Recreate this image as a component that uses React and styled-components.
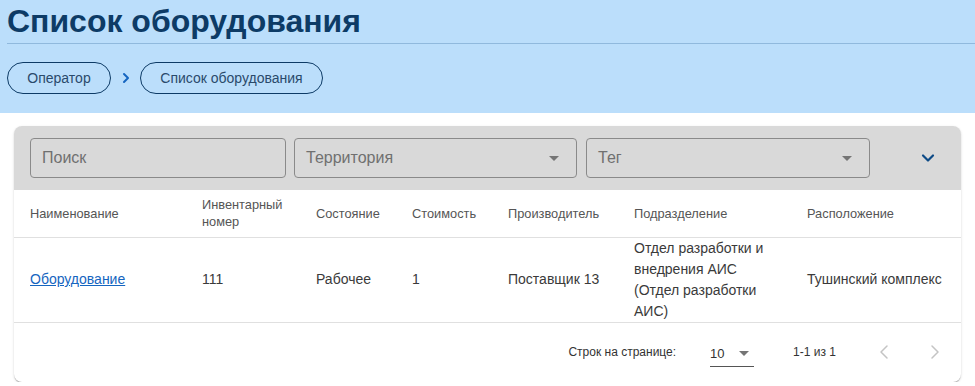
import React from "react";
import styled, { createGlobalStyle } from "styled-components";

const Global = createGlobalStyle`
  html, body { margin: 0; padding: 0; background: #fff; }
  body { font-family: "Liberation Sans", Arial, sans-serif; }
  * { box-sizing: border-box; }
`;

const Header = styled.header`
  background: #bbdefb;
  height: 113px;
  padding: 0 0 0 7px;
`;

const Title = styled.h1`
  margin: 0;
  padding-top: 3px;
  font-size: 32px;
  line-height: 36px;
  font-weight: 700;
  color: #0d3b66;
  height: 44px;
  border-bottom: 1px solid #90b9dd;
`;

const Crumbs = styled.nav`
  display: flex;
  align-items: center;
  margin-top: 18px;
`;

const Pill = styled.span`
  display: inline-flex;
  align-items: center;
  justify-content: center;
  height: 32px;
  width: ${(p) => p.$w}px;
  border: 1px solid #0d3b66;
  border-radius: 16px;
  font-size: 14px;
  color: #2a4a6b;
`;

const Sep = styled.span`
  display: flex;
  width: 29px;
  justify-content: center;
  color: #1565c0;
`;

const Main = styled.main`
  padding: 13px 14px 0 14px;
`;

const Card = styled.section`
  border-radius: 8px;
  background: #fff;
  box-shadow: 0 2px 1px -1px rgba(0,0,0,0.2), 0 1px 1px 0 rgba(0,0,0,0.14), 0 1px 3px 0 rgba(0,0,0,0.12);
  overflow: hidden;
`;

const Filters = styled.div`
  background: #d9d9d9;
  height: 64px;
  display: flex;
  align-items: center;
  padding: 0 16px;
`;

const Field = styled.div`
  width: ${(p) => p.$w}px;
  margin-right: ${(p) => p.$mr}px;
  height: 40px;
  border: 1px solid #8a8a8a;
  border-radius: 4px;
  display: flex;
  align-items: center;
  justify-content: space-between;
  padding: 0 12px 0 11px;
  font-size: 16px;
  color: #707070;
`;

const Caret = styled.span`
  width: 0;
  height: 0;
  border-left: 5px solid transparent;
  border-right: 5px solid transparent;
  border-top: 5px solid #757575;
  margin-right: 5px;
`;

const Expand = styled.span`
  margin-left: auto;
  margin-right: 7px;
  display: flex;
  color: #0d4a86;
`;

const Table = styled.table`
  width: 100%;
  border-collapse: collapse;
  table-layout: fixed;
`;

const Th = styled.th`
  text-align: left;
  font-weight: 400;
  font-size: 12.8px;
  line-height: 17px;
  color: #555;
  padding: 6px 8px 6px 16px;
  height: 47px;
  border-bottom: 1px solid #e0e0e0;
  vertical-align: middle;
`;

const Td = styled.td`
  font-size: 14px;
  line-height: 21px;
  color: #3a3a3a;
  padding: 0 8px 0 16px;
  height: 85px;
  border-bottom: 1px solid #e0e0e0;
  vertical-align: middle;
`;

const Link = styled.a`
  color: #1565c0;
  text-decoration: underline;
`;

const Footer = styled.div`
  height: 59px;
  display: flex;
  align-items: center;
  justify-content: flex-end;
  font-size: 12px;
  color: #333;
  padding-right: 14px;
`;

const Select = styled.div`
  margin-left: 34px;
  width: 44px;
  height: 25px;
  display: flex;
  align-items: center;
  justify-content: space-between;
  font-size: 13px;
  border-bottom: 1px solid #555;
  margin-top: 5px;
  padding-bottom: 2px;
`;

const Range = styled.span`
  margin-left: 39px;
`;

const NavBtn = styled.span`
  display: flex;
  color: #c4c4c4;
  margin-left: ${(p) => p.$ml}px;
`;

const Chev = ({ d, color = "currentColor", w = 2, size = 16 }) => (
  <svg width={size} height={size} viewBox="0 0 24 24" fill="none" stroke={color} strokeWidth={w} strokeLinecap="round" strokeLinejoin="round">
    <path d={d} />
  </svg>
);

const cols = [172, 114, 96, 96, 126, 173, 170];

export default function App() {
  return (
    <>
      <Global />
      <Header>
        <Title>Список оборудования</Title>
        <Crumbs>
          <Pill $w={104}>Оператор</Pill>
          <Sep><Chev d="M9 6l6 6-6 6" w={3} /></Sep>
          <Pill $w={183}>Список оборудования</Pill>
        </Crumbs>
      </Header>
      <Main>
        <Card>
          <Filters>
            <Field $w={256} $mr={8}>Поиск</Field>
            <Field $w={283} $mr={9}>Территория<Caret /></Field>
            <Field $w={284} $mr={0}>Тег<Caret /></Field>
            <Expand><Chev d="M6 9l6 6 6-6" w={2.6} size={20} /></Expand>
          </Filters>
          <Table>
            <colgroup>
              {cols.map((w, i) => <col key={i} style={{ width: w }} />)}
            </colgroup>
            <thead>
              <tr>
                <Th>Наименование</Th>
                <Th>Инвентарный номер</Th>
                <Th>Состояние</Th>
                <Th>Стоимость</Th>
                <Th>Производитель</Th>
                <Th>Подразделение</Th>
                <Th>Расположение</Th>
              </tr>
            </thead>
            <tbody>
              <tr>
                <Td><Link href="#">Оборудование</Link></Td>
                <Td>111</Td>
                <Td>Рабочее</Td>
                <Td>1</Td>
                <Td>Поставщик 13</Td>
                <Td>Отдел разработки и внедрения АИС (Отдел разработки АИС)</Td>
                <Td>Тушинский комплекс</Td>
              </tr>
            </tbody>
          </Table>
          <Footer>
            <span>Строк на странице:</span>
            <Select>10<Caret /></Select>
            <Range>1-1 из 1</Range>
            <NavBtn $ml={36}><Chev d="M15 6l-6 6 6 6" w={1.5} size={24} /></NavBtn>
            <NavBtn $ml={27}><Chev d="M9 6l6 6-6 6" w={1.5} size={24} /></NavBtn>
          </Footer>
        </Card>
      </Main>
    </>
  );
}
